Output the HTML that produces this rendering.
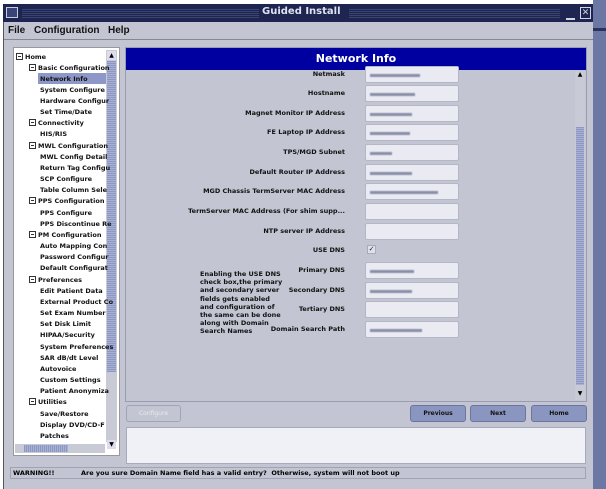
<!DOCTYPE html><html><head><style>
*{margin:0;padding:0;box-sizing:border-box}
body{width:606px;height:489px;background:#fff;position:relative;overflow:hidden;font-family:"DejaVu Sans","Liberation Sans",sans-serif;}
.a{position:absolute}
.t{font-size:7px;font-weight:bold;color:#111;white-space:nowrap}
.m{font-family:"Liberation Sans",sans-serif;font-size:10px}
.lbl{position:absolute;right:261px;font-size:6.5px;font-weight:bold;color:#111;white-space:nowrap}
.f{position:absolute;left:365px;width:94px;height:17px;background:#e9eaf2;border:1px solid #b4b7c6;border-radius:2px}
.f i{position:absolute;left:4px;top:7px;height:3px;background:#8a8fa8;filter:blur(0.6px)}
.tr{position:absolute;font-size:6.5px;font-weight:bold;color:#111;white-space:nowrap;height:11px;line-height:11px}
.bx{display:inline-block;width:7px;height:7px;border:1px solid #333;vertical-align:-1px;margin-right:2px;position:relative}
.bx:after{content:"";position:absolute;left:1px;top:2px;width:3px;height:1px;background:#333}
.btn{position:absolute;top:405px;height:17px;background:#8a96c0;border:1px solid #6a76a0;border-radius:3px;font-size:6px;font-weight:bold;text-align:center;line-height:15px;color:#111}
</style></head><body>
<div class="a" style="left:593px;top:0;width:13px;height:489px;background:#6d77a3"></div>
<div class="a" style="left:593px;top:28px;width:13px;height:3px;background:#2a3360"></div>
<div class="a" style="left:3px;top:4px;width:590px;height:485px;background:#c3c6d2;border-left:1px solid #555"></div>
<div class="a" style="left:3px;top:4px;width:590px;height:18px;background:#1d2550"></div>
<div class="a" style="left:22px;top:9px;width:237px;height:9px;background:repeating-linear-gradient(#3a4470 0 1px,#1d2550 1px 2px)"></div>
<div class="a" style="left:349px;top:9px;width:211px;height:9px;background:repeating-linear-gradient(#3a4470 0 1px,#1d2550 1px 2px)"></div>
<div class="a" style="left:6px;top:7px;width:12px;height:11px;border:1px solid #c8cce0;background:#3a4478"></div>
<div class="a t" style="left:262px;top:6px;font-size:10px;color:#dfe2f0">Guided Install</div>
<div class="a" style="left:566px;top:18px;width:9px;height:2px;background:#d0d4e4"></div>
<div class="a" style="left:580px;top:7px;width:11px;height:12px;border:1px solid #d0d4e4;color:#d0d4e4;font-size:9px;line-height:10px;text-align:center">✕</div>
<div class="a" style="left:4px;top:22px;width:589px;height:18px;background:#c3c6d2;border-bottom:1px solid #888"></div>
<div class="a t m" style="left:8px;top:25px">File</div>
<div class="a t m" style="left:34px;top:25px">Configuration</div>
<div class="a t m" style="left:108px;top:25px">Help</div>
<!-- tree -->
<div class="a" style="left:13px;top:47px;width:107px;height:409px;border:1px solid #999;background:#fff"></div>
<div class="a" style="left:106px;top:50px;width:11px;height:392px;background:#c8cbd6"></div>
<div class="a" style="left:107px;top:61px;width:9px;height:311px;background:repeating-linear-gradient(#8c97c4 0 1px,#a8b0d4 1px 2px)"></div>
<div class="a" style="left:107px;top:51px;width:9px;height:9px;background:#dde;font-size:6px;text-align:center;line-height:9px">▲</div>
<div class="a" style="left:107px;top:440px;width:9px;height:9px;background:#dde;font-size:6px;text-align:center;line-height:9px">▼</div>
<div class="a" style="left:15px;top:444px;width:90px;height:9px;background:#c8cbd6"></div>
<div class="a" style="left:24px;top:445px;width:44px;height:7px;background:repeating-linear-gradient(90deg,#8c97c4 0 1px,#a8b0d4 1px 2px)"></div>
<div class="a" style="left:38px;top:73px;width:68px;height:11px;background:#8d98c8"></div>
<div style="position:absolute;left:0;top:0">
<div class="tr" style="left:16px;top:52px"><span class="bx"></span>Home</div>
<div class="tr" style="left:29px;top:63px"><span class="bx"></span>Basic Configuration</div>
<div class="tr" style="left:40px;top:74px">Network Info</div>
<div class="tr" style="left:40px;top:85px">System Configure</div>
<div class="tr" style="left:40px;top:96px">Hardware Configur</div>
<div class="tr" style="left:40px;top:107px">Set Time/Date</div>
<div class="tr" style="left:29px;top:118px"><span class="bx"></span>Connectivity</div>
<div class="tr" style="left:40px;top:129px">HIS/RIS</div>
<div class="tr" style="left:29px;top:141px"><span class="bx"></span>MWL Configuration</div>
<div class="tr" style="left:40px;top:152px">MWL Config Detail</div>
<div class="tr" style="left:40px;top:163px">Return Tag Configu</div>
<div class="tr" style="left:40px;top:174px">SCP Configure</div>
<div class="tr" style="left:40px;top:185px">Table Column Sele</div>
<div class="tr" style="left:29px;top:196px"><span class="bx"></span>PPS Configuration</div>
<div class="tr" style="left:40px;top:208px">PPS Configure</div>
<div class="tr" style="left:40px;top:219px">PPS Discontinue Re</div>
<div class="tr" style="left:29px;top:230px"><span class="bx"></span>PM Configuration</div>
<div class="tr" style="left:40px;top:241px">Auto Mapping Con</div>
<div class="tr" style="left:40px;top:252px">Password Configur</div>
<div class="tr" style="left:40px;top:263px">Default Configurat</div>
<div class="tr" style="left:29px;top:275px"><span class="bx"></span>Preferences</div>
<div class="tr" style="left:40px;top:286px">Edit Patient Data</div>
<div class="tr" style="left:40px;top:297px">External Product Co</div>
<div class="tr" style="left:40px;top:308px">Set Exam Number</div>
<div class="tr" style="left:40px;top:319px">Set Disk Limit</div>
<div class="tr" style="left:40px;top:330px">HIPAA/Security</div>
<div class="tr" style="left:40px;top:342px">System Preferences</div>
<div class="tr" style="left:40px;top:353px">SAR dB/dt Level</div>
<div class="tr" style="left:40px;top:364px">Autovoice</div>
<div class="tr" style="left:40px;top:375px">Custom Settings</div>
<div class="tr" style="left:40px;top:386px">Patient Anonymiza</div>
<div class="tr" style="left:29px;top:397px"><span class="bx"></span>Utilities</div>
<div class="tr" style="left:40px;top:409px">Save/Restore</div>
<div class="tr" style="left:40px;top:420px">Display DVD/CD-F</div>
<div class="tr" style="left:40px;top:431px">Patches</div>
</div>
<!-- main -->
<div class="a" style="left:125px;top:47px;width:462px;height:355px;border:1px solid #9a9db0;background:#c3c6d2"></div>
<div class="a" style="left:126px;top:48px;width:460px;height:22px;background:#0000a0;color:#fff;font-size:11px;font-weight:bold;text-align:center;line-height:22px">Network Info</div>
<div class="a" style="left:575px;top:71px;width:10px;height:329px;background:#c8cbd6"></div>
<div class="a" style="left:576px;top:127px;width:8px;height:258px;background:repeating-linear-gradient(#8c97c4 0 1px,#a8b0d4 1px 2px)"></div>
<div class="a" style="left:575px;top:71px;width:10px;height:8px;font-size:6px;text-align:center;line-height:8px">▲</div>
<div class="a" style="left:575px;top:390px;width:10px;height:8px;font-size:6px;text-align:center;line-height:8px">▼</div>
<div class="lbl" style="top:70px">Netmask</div><div class="f" style="top:66px"><i style="width:50px"></i></div>
<div class="lbl" style="top:89px">Hostname</div><div class="f" style="top:85px"><i style="width:45px"></i></div>
<div class="lbl" style="top:109px">Magnet Monitor IP Address</div><div class="f" style="top:105px"><i style="width:42px"></i></div>
<div class="lbl" style="top:128px">FE Laptop IP Address</div><div class="f" style="top:124px"><i style="width:40px"></i></div>
<div class="lbl" style="top:148px">TPS/MGD Subnet</div><div class="f" style="top:144px"><i style="width:22px"></i></div>
<div class="lbl" style="top:168px">Default Router IP Address</div><div class="f" style="top:164px"><i style="width:42px"></i></div>
<div class="lbl" style="top:187px">MGD Chassis TermServer MAC Address</div><div class="f" style="top:183px"><i style="width:68px"></i></div>
<div class="lbl" style="top:207px">TermServer MAC Address (For shim supp...</div><div class="f" style="top:203px"></div>
<div class="lbl" style="top:227px">NTP server IP Address</div><div class="f" style="top:223px"></div>
<div class="lbl" style="top:246px">USE DNS</div>
<div class="a" style="left:367px;top:245px;width:9px;height:9px;border:1px solid #aab;background:#dfe1ea;font-size:7px;line-height:7px;color:#222;text-align:center">✓</div>
<div class="lbl" style="top:266px">Primary DNS</div><div class="f" style="top:262px"><i style="width:44px"></i></div>
<div class="lbl" style="top:286px">Secondary DNS</div><div class="f" style="top:282px"><i style="width:42px"></i></div>
<div class="lbl" style="top:305px">Tertiary DNS</div><div class="f" style="top:301px"></div>
<div class="lbl" style="top:325px">Domain Search Path</div><div class="f" style="top:321px"><i style="width:52px"></i></div>
<div class="a" style="left:200px;top:270px;font-size:6.5px;font-weight:bold;line-height:8.2px;color:#111;white-space:nowrap">Enabling the USE DNS<br>check box,the primary<br>and secondary server<br>fields gets enabled<br>and configuration of<br>the same can be done<br>along with Domain<br>Search Names</div>
<div class="btn" style="left:126px;width:55px;background:#c3c6d2;border-color:#a0a4b8;color:#e8e8ee;font-weight:normal">Configure</div>
<div class="btn" style="left:410px;width:56px">Previous</div>
<div class="btn" style="left:470px;width:56px">Next</div>
<div class="btn" style="left:531px;width:56px">Home</div>
<div class="a" style="left:126px;top:427px;width:460px;height:37px;background:#f0f1f6;border:1px solid #a8abbc"></div>
<div class="a" style="left:10px;top:467px;width:576px;height:12px;border:1px solid #a0a3b4"></div>
<div class="a" style="left:13px;top:468px;font-size:6.5px;font-weight:bold;line-height:10px">WARNING!!</div>
<div class="a" style="left:81px;top:468px;font-size:6.5px;font-weight:bold;line-height:10px;white-space:nowrap">Are you sure Domain Name field has a valid entry?&nbsp; Otherwise, system will not boot up</div>
</body></html>
